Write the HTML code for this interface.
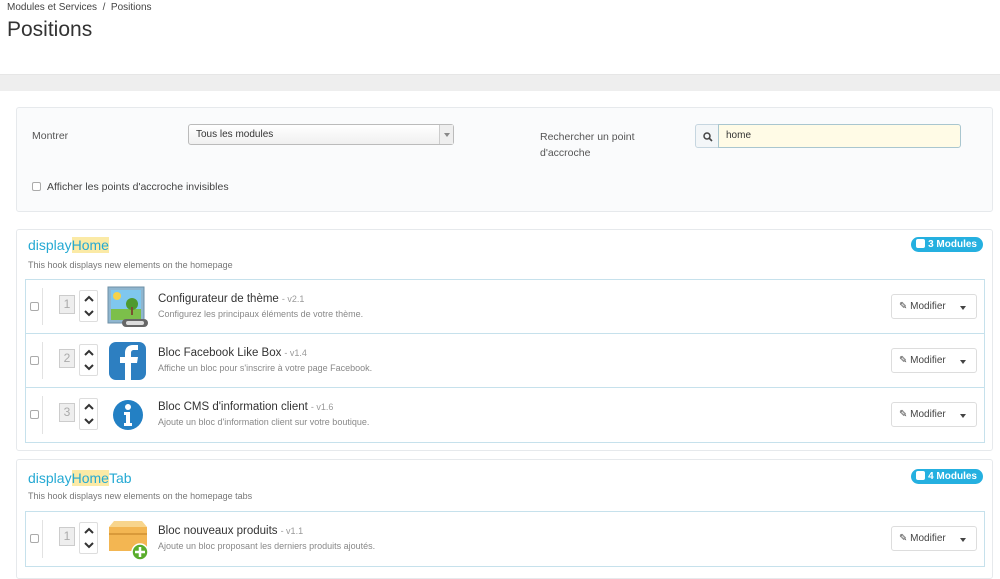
<!DOCTYPE html>
<html><head><meta charset="utf-8"><style>
*{box-sizing:border-box;margin:0;padding:0}
body{width:1000px;height:557px;overflow:hidden;background:#fff;font-family:"Liberation Sans",sans-serif;color:#555;position:relative}
.a{position:absolute}
.panel{position:absolute;left:16px;width:977px;border:1px solid #e6e9ec;background:#fff;border-radius:3px}
.title{position:absolute;left:11px;font-size:14px;color:#25a9d3}
.title span{background:#fbeaa6}
.desc{position:absolute;left:11px;font-size:9px;color:#777}
.badge{position:absolute;right:9px;background:#25b0e0;color:#fff;font-size:10px;font-weight:bold;border-radius:8px;padding:2px 6px 2px 5px}
.badge i{display:inline-block;width:9px;height:9px;background:#fff;border-radius:2px;vertical-align:-1px;margin-right:3px}
.list{position:absolute;left:8px;width:960px;border:1px solid #c6e1ec}
.row{position:relative;height:54px;border-bottom:1px solid #c6e1ec;background:#fff}
.row:last-child{border-bottom:none}
.cb{position:absolute;left:4px;top:22px;width:9px;height:9px;border:1px solid #aaa;border-radius:2px;background:#fff}
.sep{position:absolute;left:16px;top:8px;bottom:8px;border-left:1px solid #e2e2e2}
.num{position:absolute;left:33px;top:15px;width:16px;height:19px;border:1px solid #ccc;background:#eee;color:#aaa;font-size:12px;text-align:center;line-height:17px}
.arr{position:absolute;left:53px;top:10px;width:19px;height:32px;border:1px solid #ddd;border-radius:2px;background:#fff}
.arr svg{position:absolute;left:4px}
.ico{position:absolute;left:80px;top:5px;width:44px;height:44px}
.nm{position:absolute;left:132px;top:13px;font-size:11.5px;color:#333}
.nm small{font-size:9px;color:#999;margin-left:3px}
.ds{position:absolute;left:132px;top:29px;font-size:9px;color:#888}
.btn{position:absolute;left:865px;top:14px;width:86px;height:25px;border:1px solid #ddd;border-radius:3px;background:#fff;font-size:10px;color:#444;padding:6px 0 0 7px}
.btn b{position:absolute;right:10px;top:11px;border:3px solid transparent;border-top:4px solid #444}
</style></head><body>
<div class="a" style="left:7px;top:2px;font-size:10px;color:#444">Modules et Services &nbsp;/&nbsp; Positions</div>
<div class="a" style="left:7px;top:18px;font-size:21px;color:#333">Positions</div>
<div class="a" style="left:0;top:74px;width:1000px;height:17px;background:#eeeeee;border-top:1px solid #e6e6e6"></div>

<div class="panel" style="top:107px;height:105px;background:#fafbfc">
 <div class="a" style="left:15px;top:22px;font-size:10.5px;color:#555">Montrer</div>
 <div class="a" style="left:171px;top:16px;width:266px;height:21px;border:1px solid #bbb;border-radius:3px;background:linear-gradient(#fff,#f0f0f0);font-size:10px;color:#333;padding:4px 7px">Tous les modules<span class="a" style="right:0;top:0;width:14px;height:19px;border-left:1px solid #ccc;background:#eee"><b class="a" style="left:4px;top:8px;border:3px solid transparent;border-top:4px solid #888"></b></span></div>
 <div class="a" style="left:15px;top:74px;width:9px;height:9px;border:1px solid #aaa;border-radius:2px;background:#fff"></div>
 <div class="a" style="left:30px;top:73px;font-size:10.5px;color:#444">Afficher les points d'accroche invisibles</div>
 <div class="a" style="left:523px;top:21px;font-size:10.5px;color:#555;line-height:16px">Rechercher un point<br>d'accroche</div>
 <div class="a" style="left:678px;top:16px;width:24px;height:24px;border:1px solid #c6d6e0;border-radius:3px 0 0 3px;background:#f3f6f8"><svg class="a" style="left:7px;top:7px" width="10" height="10"><circle cx="4" cy="4" r="3" fill="none" stroke="#444" stroke-width="1.5"/><line x1="6" y1="6" x2="9" y2="9" stroke="#444" stroke-width="1.6"/></svg></div>
 <div class="a" style="left:701px;top:16px;width:243px;height:24px;border:1px solid #a9c6cf;border-radius:0 3px 3px 0;background:#fffbe6;font-size:10px;color:#333;padding:5px 7px">home</div>
</div>

<div class="panel" style="top:229px;height:222px">
 <div class="title" style="top:7px">display<span>Home</span></div>
 <div class="badge" style="top:7px"><i></i>3 Modules</div>
 <div class="desc" style="top:30px">This hook displays new elements on the homepage</div>
 <div class="list" style="top:49px">
  <div class="row"><div class="cb"></div><div class="sep"></div><div class="num">1</div>
   <div class="arr"><svg style="top:4px" width="10" height="8"><path d="M1 6L5 2L9 6" stroke="#333" stroke-width="2" fill="none"/></svg><svg style="top:18px" width="10" height="8"><path d="M1 2L5 6L9 2" stroke="#333" stroke-width="2" fill="none"/></svg></div>
   <svg class="ico" viewBox="0 0 44 44"><rect x="2" y="2" width="36" height="36" fill="#8fb6cf" stroke="#6e8fa5"/><rect x="5" y="5" width="30" height="24" fill="#7fc7ee"/><rect x="5" y="24" width="30" height="11" fill="#7cbf4a"/><circle cx="11" cy="11" r="4" fill="#f6d24a"/><circle cx="26" cy="19" r="6" fill="#4e9a2e"/><rect x="25" y="22" width="2" height="8" fill="#7a5130"/><rect x="16" y="34" width="26" height="8" rx="4" fill="#666"/><rect x="20" y="36" width="18" height="4" rx="2" fill="#ddd"/></svg>
   <div class="nm">Configurateur de thème<small>- v2.1</small></div><div class="ds">Configurez les principaux éléments de votre thème.</div>
   <div class="btn">✎ Modifier<b></b></div></div>
  <div class="row"><div class="cb"></div><div class="sep"></div><div class="num">2</div>
   <div class="arr"><svg style="top:4px" width="10" height="8"><path d="M1 6L5 2L9 6" stroke="#333" stroke-width="2" fill="none"/></svg><svg style="top:18px" width="10" height="8"><path d="M1 2L5 6L9 2" stroke="#333" stroke-width="2" fill="none"/></svg></div>
   <svg class="ico" viewBox="0 0 44 44"><rect x="3" y="3" width="37" height="38" rx="7" fill="#2d7fc1"/><path d="M25 41V24h6l1-6h-7v-4c0-2 1-3 3-3h4V6h-5c-5 0-8 3-8 8v4h-5v6h5v17z" fill="#fff"/></svg>
   <div class="nm">Bloc Facebook Like Box<small>- v1.4</small></div><div class="ds">Affiche un bloc pour s'inscrire à votre page Facebook.</div>
   <div class="btn">✎ Modifier<b></b></div></div>
  <div class="row"><div class="cb"></div><div class="sep"></div><div class="num">3</div>
   <div class="arr"><svg style="top:4px" width="10" height="8"><path d="M1 6L5 2L9 6" stroke="#333" stroke-width="2" fill="none"/></svg><svg style="top:18px" width="10" height="8"><path d="M1 2L5 6L9 2" stroke="#333" stroke-width="2" fill="none"/></svg></div>
   <svg class="ico" viewBox="0 0 44 44"><circle cx="22" cy="22" r="15" fill="#2380c4"/><circle cx="22" cy="14" r="3" fill="#fff"/><path d="M18 19h6v11h2v3h-8v-3h2v-8h-2z" fill="#fff"/></svg>
   <div class="nm">Bloc CMS d'information client<small>- v1.6</small></div><div class="ds">Ajoute un bloc d'information client sur votre boutique.</div>
   <div class="btn">✎ Modifier<b></b></div></div>
 </div>
</div>

<div class="panel" style="top:459px;height:120px">
 <div class="title" style="top:10px">display<span>Home</span>Tab</div>
 <div class="badge" style="top:9px"><i></i>4 Modules</div>
 <div class="desc" style="top:31px">This hook displays new elements on the homepage tabs</div>
 <div class="list" style="top:51px">
  <div class="row"><div class="cb"></div><div class="sep"></div><div class="num">1</div>
   <div class="arr"><svg style="top:4px" width="10" height="8"><path d="M1 6L5 2L9 6" stroke="#333" stroke-width="2" fill="none"/></svg><svg style="top:18px" width="10" height="8"><path d="M1 2L5 6L9 2" stroke="#333" stroke-width="2" fill="none"/></svg></div>
   <svg class="ico" viewBox="0 0 44 44"><path d="M3 10h38v24H3z" fill="#f3b652"/><path d="M3 10l5-6h28l5 6z" fill="#f8d58c"/><rect x="3" y="16" width="38" height="2" fill="#d99a3a"/><circle cx="34" cy="35" r="8" fill="#5aad2c" stroke="#fff" stroke-width="1.5"/><path d="M34 30v10M29 35h10" stroke="#fff" stroke-width="2.5"/></svg>
   <div class="nm">Bloc nouveaux produits<small>- v1.1</small></div><div class="ds">Ajoute un bloc proposant les derniers produits ajoutés.</div>
   <div class="btn">✎ Modifier<b></b></div></div>
 </div>
</div>
</body></html>
